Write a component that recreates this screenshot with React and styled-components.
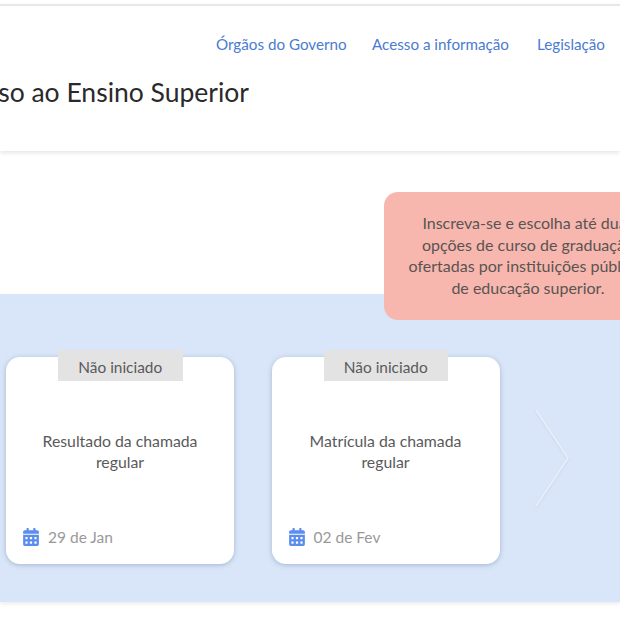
import React from 'react';
import styled, { createGlobalStyle } from 'styled-components';
import { FaCalendarAlt } from 'react-icons/fa';

const GlobalStyle = createGlobalStyle`
  html, body {
    margin: 0;
    padding: 0;
    width: 620px;
    height: 620px;
    overflow: hidden;
    background: #fff;
    font-family: Lato, "Open Sans", sans-serif;
  }
`;

const Page = styled.div`
  width: 620px;
  height: 620px;
  overflow: hidden;
  padding-top: 4px;
  box-sizing: border-box;
`;

const Header = styled.header`
  height: 147px;
  border-top: 2px solid #e8e8e8;
  box-sizing: border-box;
  background: #fff;
  box-shadow: 0 2px 4px rgba(0, 0, 0, 0.1);
  padding-top: 28px;
`;

const Nav = styled.nav`
  display: flex;
  justify-content: flex-end;
  gap: 25px;
  padding-right: 13px;
`;

const NavLink = styled.a`
  width: ${(p) => p.$width}px;
  color: #4a7bd0;
  font-size: 15.2px;
  line-height: 20px;
  text-align: center;
  white-space: nowrap;
`;

const TitleRow = styled.div`
  width: 249px;
  display: flex;
  justify-content: flex-end;
  margin-top: 21px;
`;

const Title = styled.h1`
  margin: 0;
  flex: none;
  font-size: 26.5px;
  line-height: 34px;
  font-weight: 400;
  color: #2a2a2a;
  white-space: nowrap;
`;

const NoticeRow = styled.div`
  display: flex;
  justify-content: flex-end;
  margin: 41px -52px -26px 0;
  position: relative;
  z-index: 1;
`;

const Notice = styled.div`
  width: 288px;
  height: 128px;
  box-sizing: border-box;
  padding-top: 20px;
  border-radius: 14px;
  background: #f7b7ae;
  color: #595452;
  font-size: 16px;
  line-height: 21.7px;
  text-align: center;
  white-space: nowrap;
`;

const Band = styled.section`
  height: 308px;
  box-sizing: border-box;
  background: #d9e6f9;
  box-shadow: 0 2px 4px rgba(0, 0, 0, 0.08);
  padding: 63px 0 0 6px;
  display: flex;
  align-items: flex-start;
  gap: 37.5px;
`;

const Card = styled.article`
  position: relative;
  width: 228px;
  height: 207px;
  box-sizing: border-box;
  border-radius: 14px;
  background: #fff;
  box-shadow: 0 1px 5px rgba(70, 90, 130, 0.35);
  display: flex;
  flex-direction: column;
  padding: 0 17px 17px;
`;

const Tag = styled.div`
  position: absolute;
  top: -7px;
  left: 52px;
  width: 124.5px;
  height: 31px;
  background: #e3e3e3;
  color: #5a5a5a;
  font-size: 15.4px;
  line-height: 34px;
  text-align: center;
`;

const CardTitle = styled.p`
  margin: 0;
  flex: 1;
  display: flex;
  align-items: center;
  justify-content: center;
  text-align: center;
  color: #5a5a5a;
  font-size: 15.8px;
  line-height: 21px;
  padding: 18px 10px 0;
`;

const DateRow = styled.div`
  display: flex;
  align-items: center;
  gap: 9px;
  color: #999;
  font-size: 15.5px;
  line-height: 20px;

  svg {
    width: 16px;
    height: 18px;
    color: #5b8def;
    flex: none;
  }
`;

const Chevron = styled.svg`
  flex: none;
  width: 36px;
  height: 100px;
  margin: 52px 0 0 -3.5px;
  fill: none;
  stroke: #e6eefa;
  stroke-width: 2;
  filter: drop-shadow(0 1px 1px rgba(90, 110, 150, 0.12));
`;

const links = [
  { label: 'Órgãos do Governo', width: 130 },
  { label: 'Acesso a informação', width: 139 },
  { label: 'Legislação', width: 72 },
];

const steps = [
  { title: 'Resultado da chamada regular', date: '29 de Jan' },
  { title: 'Matrícula da chamada regular', date: '02 de Fev' },
];

function App() {
  return (
    <Page>
      <GlobalStyle />
      <Header>
        <Nav>
          {links.map((link) => (
            <NavLink key={link.label} $width={link.width}>
              {link.label}
            </NavLink>
          ))}
        </Nav>
        <TitleRow>
          <Title>Acesso ao Ensino Superior</Title>
        </TitleRow>
      </Header>
      <NoticeRow>
        <Notice>
          Inscreva-se e escolha até duas
          <br />
          opções de curso de graduação
          <br />
          ofertadas por instituições públicas
          <br />
          de educação superior.
        </Notice>
      </NoticeRow>
      <Band>
        {steps.map((step) => (
          <Card key={step.date}>
            <Tag>Não iniciado</Tag>
            <CardTitle>{step.title}</CardTitle>
            <DateRow>
              <FaCalendarAlt />
              {step.date}
            </DateRow>
          </Card>
        ))}
        <Chevron viewBox="0 0 36 100">
          <polyline points="2,1 34,49 2,97" />
        </Chevron>
      </Band>
    </Page>
  );
}

export default App;
